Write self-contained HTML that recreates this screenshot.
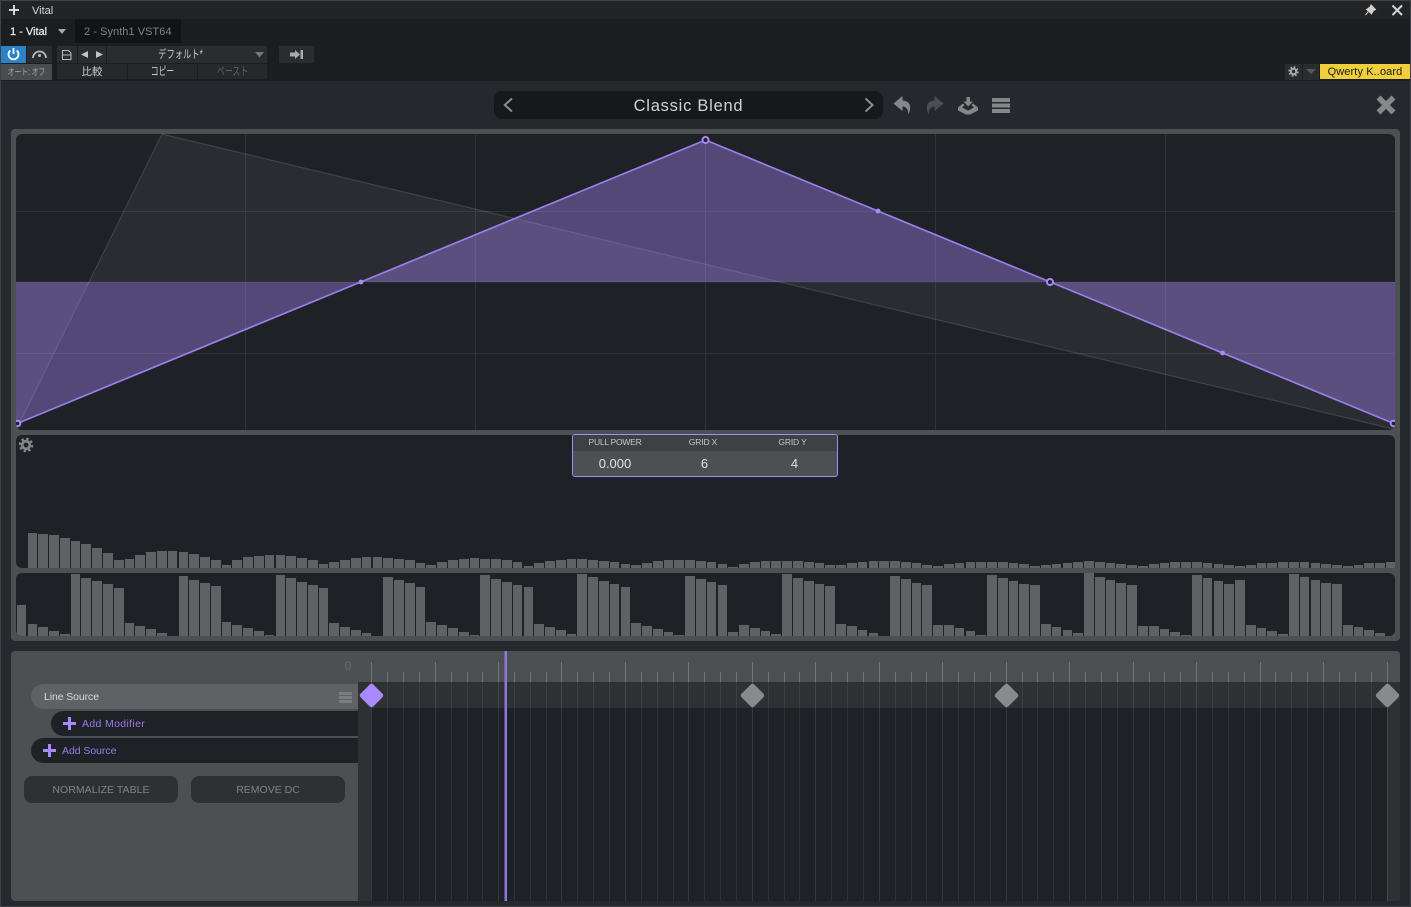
<!DOCTYPE html>
<html><head><meta charset="utf-8"><title>Vital</title>
<style>
html,body{margin:0;padding:0;background:#25282d;}
#r{position:relative;width:1411px;height:907px;overflow:hidden;background:#25282d;font-family:"Liberation Sans","Noto Sans CJK JP",sans-serif;}
#r div{position:absolute;box-sizing:border-box;}
.t{white-space:nowrap;text-align:center;}
.b{background:#2a2d30;}
.c{background:#26292c;}
.p{background:#1e2125;border-radius:6px;overflow:hidden;}
.f{display:flex;align-items:flex-end;gap:1.1px;padding-left:.8px;}
.f i{display:block;flex:1 1 0;background:#5f6164;}
svg{position:absolute;left:0;top:0;}
</style></head><body><div id="r">
<div style="left:0;top:0;width:1411px;height:19px;background:#232426"></div>
<div style="left:0;top:19px;width:1411px;height:62px;background:#1a1e21"></div>
<div style="left:75px;top:19px;width:106px;height:24px;background:#111315"></div>

<div class="t" style="left:32px;top:4px;color:#d8d8d8;font-size:11px;line-height:14px">Vital</div>
<div class="t" style="left:10px;top:25px;color:#f0f0f0;font-size:11px;line-height:14px;-webkit-text-stroke:.2px #f0f0f0">1 - Vital</div>
<div class="t" style="left:84px;top:25px;color:#7f8387;font-size:11px;line-height:14px;letter-spacing:.05px">2 - Synth1 VST64</div>

<div style="left:1px;top:46px;width:25px;height:17px;background:#2a83c8"></div>
<div class="b" style="left:27px;top:46px;width:25px;height:17px"></div>
<div style="left:1px;top:64px;width:51px;height:16px;background:#4a4d50"></div>
<div class="t" style="left:1px;top:64.5px;width:51px;color:#a8aaac;font-size:9px;line-height:15px;transform:scaleX(.75)">オート: オフ</div>
<div class="b" style="left:57px;top:46px;width:20px;height:17px"></div>
<div class="b" style="left:78px;top:46px;width:28px;height:17px"></div>
<div class="b" style="left:107px;top:46px;width:160px;height:17px"></div>
<div class="t" style="left:107px;top:47px;width:147px;color:#c8c8c8;font-size:11.5px;line-height:17px;transform:scaleX(.72)">デフォルト*</div>
<div class="b" style="left:279px;top:46px;width:35px;height:17px"></div>
<div class="c" style="left:57px;top:64px;width:70px;height:15px"></div>
<div class="c" style="left:128px;top:64px;width:69px;height:15px"></div>
<div class="c" style="left:198px;top:64px;width:69px;height:15px"></div>
<div class="t" style="left:57px;top:65px;width:70px;color:#c8c8c8;font-size:10.5px;line-height:15px">比較</div>
<div class="t" style="left:128px;top:65px;width:69px;color:#c8c8c8;font-size:11.5px;line-height:15px;transform:scaleX(.68)">コピー</div>
<div class="t" style="left:198px;top:65px;width:69px;color:#5d6064;font-size:11.5px;line-height:15px;transform:scaleX(.69)">ペースト</div>

<div class="b" style="left:1285px;top:64px;width:17px;height:16px"></div>
<div class="b" style="left:1303px;top:64px;width:16px;height:16px"></div>
<div style="left:1320px;top:64px;width:90px;height:15px;background:#f0cf3c"></div>
<div class="t" style="left:1320px;top:65px;width:90px;color:#1c1c10;font-size:11px;line-height:15px;letter-spacing:.1px">Qwerty K..oard</div>

<div style="left:494px;top:91px;width:389px;height:28px;background:#16191c;border-radius:8px"></div>
<div class="t" style="left:494px;top:92px;width:389px;color:#d2d2d2;font-size:16.5px;line-height:28px;letter-spacing:.75px">Classic Blend</div>

<!-- editor frame -->
<div style="left:11px;top:129px;width:1389px;height:512px;background:#4c5052;border-radius:4px"></div>
<div class="p" style="left:16px;top:134px;width:1379px;height:296px">
<svg width="1379" height="296" viewBox="16 134 1379 296" style="display:block">
<path d="M245.5 134V430M475.5 134V430M705.5 134V430M935.5 134V430M1165.5 134V430M16 211.5H1395M16 282H1395M16 353.5H1395" stroke="#fff" stroke-opacity=".08" fill="none" shape-rendering="crispEdges"/>
<path d="M89 282L162 134L780 282ZM780 282L1395 429.5V282ZM16 282H89L18 426H16Z" fill="#fff" fill-opacity=".05"/>
<path d="M18 426L162 134L1395 429.5" fill="none" stroke="#fff" stroke-opacity=".13" stroke-width="1.2"/>
<path d="M16 282H361L16 424ZM361 282L705.5 140L1050 282ZM1050 282H1395V424Z" fill="#aa88ff" fill-opacity=".38"/>
<path d="M16 424L705.5 140L1395 424" fill="none" stroke="#9a7eea" stroke-width="1.7"/>
<circle cx="361" cy="282" r="2.4" fill="#aa88ff"/><circle cx="878" cy="211" r="2.4" fill="#aa88ff"/><circle cx="1222.5" cy="353" r="2.4" fill="#aa88ff"/>
<g fill="#1e2125" stroke="#aa88ff" stroke-width="2"><circle cx="705.5" cy="140" r="3"/><circle cx="1050" cy="282" r="3"/><circle cx="17.5" cy="423.5" r="2.8"/><circle cx="1393.5" cy="423.5" r="2.8"/></g>
</svg></div>

<div class="p f" style="left:16px;top:435px;width:1379px;height:133px;border-radius:6px 6px 0 6px"><i style="height:0"></i><i style="height:35px"></i><i style="height:34px"></i><i style="height:33px"></i><i style="height:30px"></i><i style="height:27px"></i><i style="height:24px"></i><i style="height:20px"></i><i style="height:15px"></i><i style="height:8px"></i><i style="height:9px"></i><i style="height:13px"></i><i style="height:16px"></i><i style="height:17px"></i><i style="height:17px"></i><i style="height:16px"></i><i style="height:14px"></i><i style="height:11px"></i><i style="height:8px"></i><i style="height:3px"></i><i style="height:8px"></i><i style="height:11px"></i><i style="height:12px"></i><i style="height:13px"></i><i style="height:13px"></i><i style="height:12px"></i><i style="height:10px"></i><i style="height:8px"></i><i style="height:4px"></i><i style="height:6px"></i><i style="height:8px"></i><i style="height:10px"></i><i style="height:11px"></i><i style="height:11px"></i><i style="height:10px"></i><i style="height:9px"></i><i style="height:8px"></i><i style="height:5px"></i><i style="height:3px"></i><i style="height:6px"></i><i style="height:8px"></i><i style="height:9px"></i><i style="height:10px"></i><i style="height:9px"></i><i style="height:9px"></i><i style="height:8px"></i><i style="height:6px"></i><i style="height:2px"></i><i style="height:5px"></i><i style="height:7px"></i><i style="height:8px"></i><i style="height:9px"></i><i style="height:9px"></i><i style="height:8px"></i><i style="height:7px"></i><i style="height:6px"></i><i style="height:4px"></i><i style="height:3px"></i><i style="height:5px"></i><i style="height:7px"></i><i style="height:8px"></i><i style="height:8px"></i><i style="height:8px"></i><i style="height:7px"></i><i style="height:6px"></i><i style="height:4px"></i><i style="height:1px"></i><i style="height:4px"></i><i style="height:6px"></i><i style="height:7px"></i><i style="height:7px"></i><i style="height:7px"></i><i style="height:7px"></i><i style="height:6px"></i><i style="height:5px"></i><i style="height:3px"></i><i style="height:3px"></i><i style="height:5px"></i><i style="height:6px"></i><i style="height:7px"></i><i style="height:7px"></i><i style="height:7px"></i><i style="height:6px"></i><i style="height:5px"></i><i style="height:3px"></i><i style="height:2px"></i><i style="height:4px"></i><i style="height:5px"></i><i style="height:6px"></i><i style="height:6px"></i><i style="height:6px"></i><i style="height:6px"></i><i style="height:5px"></i><i style="height:4px"></i><i style="height:2px"></i><i style="height:3px"></i><i style="height:4px"></i><i style="height:5px"></i><i style="height:6px"></i><i style="height:7px"></i><i style="height:6px"></i><i style="height:5px"></i><i style="height:4px"></i><i style="height:3px"></i><i style="height:2px"></i><i style="height:4px"></i><i style="height:5px"></i><i style="height:6px"></i><i style="height:6px"></i><i style="height:6px"></i><i style="height:5px"></i><i style="height:4px"></i><i style="height:3px"></i><i style="height:2px"></i><i style="height:3px"></i><i style="height:5px"></i><i style="height:5px"></i><i style="height:6px"></i><i style="height:6px"></i><i style="height:6px"></i><i style="height:5px"></i><i style="height:4px"></i><i style="height:3px"></i><i style="height:2px"></i><i style="height:3px"></i><i style="height:5px"></i><i style="height:5px"></i><i style="height:6px"></i></div>

<div class="p f" style="left:16px;top:573px;width:1379px;height:63px"><i style="height:31px"></i><i style="height:12px"></i><i style="height:9px"></i><i style="height:5px"></i><i style="height:2px"></i><i style="height:62px"></i><i style="height:58px"></i><i style="height:55px"></i><i style="height:52px"></i><i style="height:48px"></i><i style="height:13px"></i><i style="height:10px"></i><i style="height:7px"></i><i style="height:3px"></i><i style="height:0"></i><i style="height:60px"></i><i style="height:56px"></i><i style="height:53px"></i><i style="height:50px"></i><i style="height:14px"></i><i style="height:11px"></i><i style="height:8px"></i><i style="height:5px"></i><i style="height:1px"></i><i style="height:61px"></i><i style="height:58px"></i><i style="height:54px"></i><i style="height:51px"></i><i style="height:48px"></i><i style="height:13px"></i><i style="height:9px"></i><i style="height:6px"></i><i style="height:3px"></i><i style="height:0"></i><i style="height:59px"></i><i style="height:56px"></i><i style="height:53px"></i><i style="height:49px"></i><i style="height:14px"></i><i style="height:11px"></i><i style="height:8px"></i><i style="height:4px"></i><i style="height:1px"></i><i style="height:61px"></i><i style="height:57px"></i><i style="height:54px"></i><i style="height:51px"></i><i style="height:49px"></i><i style="height:12px"></i><i style="height:9px"></i><i style="height:6px"></i><i style="height:2px"></i><i style="height:62px"></i><i style="height:59px"></i><i style="height:55px"></i><i style="height:52px"></i><i style="height:49px"></i><i style="height:13px"></i><i style="height:10px"></i><i style="height:7px"></i><i style="height:4px"></i><i style="height:1px"></i><i style="height:60px"></i><i style="height:57px"></i><i style="height:54px"></i><i style="height:51px"></i><i style="height:4px"></i><i style="height:11px"></i><i style="height:8px"></i><i style="height:5px"></i><i style="height:2px"></i><i style="height:62px"></i><i style="height:58px"></i><i style="height:55px"></i><i style="height:52px"></i><i style="height:50px"></i><i style="height:12px"></i><i style="height:10px"></i><i style="height:6px"></i><i style="height:3px"></i><i style="height:0"></i><i style="height:60px"></i><i style="height:57px"></i><i style="height:53px"></i><i style="height:51px"></i><i style="height:11px"></i><i style="height:11px"></i><i style="height:8px"></i><i style="height:5px"></i><i style="height:1px"></i><i style="height:61px"></i><i style="height:58px"></i><i style="height:55px"></i><i style="height:52px"></i><i style="height:51px"></i><i style="height:12px"></i><i style="height:9px"></i><i style="height:6px"></i><i style="height:3px"></i><i style="height:63px"></i><i style="height:59px"></i><i style="height:56px"></i><i style="height:53px"></i><i style="height:51px"></i><i style="height:10px"></i><i style="height:10px"></i><i style="height:7px"></i><i style="height:4px"></i><i style="height:1px"></i><i style="height:61px"></i><i style="height:58px"></i><i style="height:55px"></i><i style="height:52px"></i><i style="height:56px"></i><i style="height:11px"></i><i style="height:8px"></i><i style="height:5px"></i><i style="height:2px"></i><i style="height:62px"></i><i style="height:59px"></i><i style="height:56px"></i><i style="height:53px"></i><i style="height:52px"></i><i style="height:11px"></i><i style="height:9px"></i><i style="height:6px"></i><i style="height:3px"></i><i style="height:0"></i></div>

<!-- overlay -->
<div style="left:572px;top:434px;width:266px;height:43px;background:#4c5053;border:1px solid #aa88ff;border-radius:3px;overflow:hidden"><div style="left:0;top:0;width:264px;height:16px;background:#3e4144"></div></div>
<div class="t" style="left:565px;top:436px;width:100px;color:#c4c6c8;font-size:8.5px;line-height:12px;letter-spacing:-.25px">PULL POWER</div>
<div class="t" style="left:653px;top:436px;width:100px;color:#c4c6c8;font-size:8.5px;line-height:12px;letter-spacing:-.15px">GRID X</div>
<div class="t" style="left:742.5px;top:436px;width:100px;color:#c4c6c8;font-size:8.5px;line-height:12px;letter-spacing:-.15px">GRID Y</div>
<div class="t" style="left:565px;top:456px;width:100px;color:#e2e2e2;font-size:13px;line-height:16px">0.000</div>
<div class="t" style="left:654.5px;top:456px;width:100px;color:#e2e2e2;font-size:13px;line-height:16px">6</div>
<div class="t" style="left:744.5px;top:456px;width:100px;color:#e2e2e2;font-size:13px;line-height:16px">4</div>

<!-- bottom panel -->
<div style="left:11px;top:651px;width:1389px;height:250px;background:#4c5053;border-radius:4px;overflow:hidden">
<div style="left:347px;top:31px;width:1042px;height:219px;background:#2e3134"></div>
<div style="left:360px;top:57px;width:1016px;height:193px;background:#1e2125"></div>
</div>
<div class="t" style="left:338px;top:659px;width:20px;color:#686b6e;font-size:12px;line-height:14px">0</div>
<div style="left:31px;top:684px;width:327px;height:25px;background:#5f6164;border-radius:12.5px 0 0 12.5px"></div>
<div style="left:51px;top:711px;width:307px;height:25px;background:#1e2125;border-radius:12.5px 0 0 12.5px"></div>
<div style="left:31px;top:738px;width:327px;height:25px;background:#1e2125;border-radius:12.5px 0 0 12.5px"></div>
<div class="t" style="left:44px;top:690px;color:#d8d8d8;font-size:10.5px;line-height:14px;letter-spacing:-.1px">Line Source</div>
<div class="t" style="left:82px;top:717px;color:#9c7ce8;font-size:10.5px;line-height:14px;letter-spacing:.35px">Add Modifier</div>
<div class="t" style="left:62px;top:744px;color:#9c7ce8;font-size:10.5px;line-height:14px;letter-spacing:-.05px">Add Source</div>
<div style="left:24px;top:776px;width:154px;height:27px;background:#2e3134;border-radius:8px"></div>
<div style="left:191px;top:776px;width:154px;height:27px;background:#2e3134;border-radius:8px"></div>
<div class="t" style="left:24px;top:777px;width:154px;color:#808386;font-size:10.5px;line-height:27px;letter-spacing:.05px">NORMALIZE TABLE</div>
<div class="t" style="left:191px;top:777px;width:154px;color:#808386;font-size:10.5px;line-height:27px">REMOVE DC</div>

<!-- graphic overlay -->
<svg width="1411" height="907" viewBox="0 0 1411 907">
<defs>
<linearGradient id="tg" gradientUnits="userSpaceOnUse" x1="0" y1="651" x2="0" y2="901"><stop offset="0" stop-color="#fff" stop-opacity=".2"/><stop offset=".124" stop-color="#fff" stop-opacity=".2"/><stop offset=".124" stop-color="#fff" stop-opacity=".07"/><stop offset="1" stop-color="#fff" stop-opacity=".07"/></linearGradient>
<linearGradient id="tm" gradientUnits="userSpaceOnUse" x1="0" y1="651" x2="0" y2="901"><stop offset="0" stop-color="#fff" stop-opacity=".22"/><stop offset=".124" stop-color="#fff" stop-opacity=".22"/><stop offset=".124" stop-color="#fff" stop-opacity=".11"/><stop offset="1" stop-color="#fff" stop-opacity=".11"/></linearGradient>
</defs>
<rect x="0" y="0" width="1411" height="1" fill="#3f4247"/><rect x="0" y="0" width="1" height="907" fill="#3f4247"/><rect x="1410" y="0" width="1" height="907" fill="#3f4247"/><rect x="0" y="906" width="1411" height="1" fill="#3f4247"/>
<rect x="358" y="682" width="1042" height="26" fill="#2e3134"/>
<path fill="none" stroke="url(#tg)" shape-rendering="crispEdges" d="M387.5 672V901M403.5 672V901M419.5 672V901M451.5 672V901M467.5 672V901M482.5 672V901M514.5 672V901M530.5 672V901M546.5 672V901M577.5 672V901M593.5 672V901M609.5 672V901M641.5 672V901M657.5 672V901M673.5 672V901M704.5 672V901M720.5 672V901M736.5 672V901M768.5 672V901M784.5 672V901M799.5 672V901M831.5 672V901M847.5 672V901M863.5 672V901M895.5 672V901M911.5 672V901M926.5 672V901M958.5 672V901M974.5 672V901M990.5 672V901M1022.5 672V901M1037.5 672V901M1053.5 672V901M1085.5 672V901M1101.5 672V901M1117.5 672V901M1149.5 672V901M1164.5 672V901M1180.5 672V901M1212.5 672V901M1228.5 672V901M1244.5 672V901M1275.5 672V901M1291.5 672V901M1307.5 672V901M1339.5 672V901M1355.5 672V901M1371.5 672V901"/>
<path fill="none" stroke="url(#tm)" shape-rendering="crispEdges" d="M371.5 662V901M435.5 662V901M498.5 662V901M561.5 662V901M625.5 662V901M688.5 662V901M752.5 662V901M815.5 662V901M879.5 662V901M942.5 662V901M1006.5 662V901M1069.5 662V901M1133.5 662V901M1196.5 662V901M1260.5 662V901M1323.5 662V901M1387.5 662V901"/>
<rect x="504.5" y="651" width="2.5" height="250" fill="#8f75dc"/>
<g fill="#888b8e"><rect x="743.5" y="686.5" width="18" height="18" rx="2.5" transform="rotate(45 752.5 695.5)"/><rect x="997.5" y="686.5" width="18" height="18" rx="2.5" transform="rotate(45 1006.5 695.5)"/><rect x="1378.5" y="686.5" width="18" height="18" rx="2.5" transform="rotate(45 1387.5 695.5)"/></g>
<rect x="362.5" y="686.5" width="18" height="18" rx="2.5" transform="rotate(45 371.5 695.5)" fill="#aa88ff"/>
<g fill="#7b7d80"><rect x="339" y="692" width="13" height="3"/><rect x="339" y="696" width="13" height="3"/><rect x="339" y="700" width="13" height="3"/></g>
<g fill="#aa88ff"><rect x="63" y="722" width="13" height="3"/><rect x="68" y="717" width="3" height="13"/><rect x="43" y="749" width="13" height="3"/><rect x="48" y="744" width="3" height="13"/></g>
<!-- title bar -->
<path d="M9 10H19M14 5V15" stroke="#d8d8d8" stroke-width="2" fill="none"/>
<path d="M1392.5 5.5L1402 15M1402 5.5L1392.5 15" stroke="#d8d8d8" stroke-width="2" fill="none"/>
<path d="M1371 5L1375.5 9.5L1373.5 10.5L1371.5 14L1366.5 9.5L1370 7ZM1368 12L1365.5 15" fill="#cfcfcf" stroke="#cfcfcf" stroke-width="1"/>
<path d="M58 29L66 29L62 34Z" fill="#a8aaac"/>
<!-- toolbar icons -->
<path d="M10.3 50.5A5 5 0 1 0 16.7 50.5M13.5 48V54" fill="none" stroke="#fff" stroke-width="1.8"/>
<path d="M33 58A6.5 6.5 0 0 1 46 58" fill="none" stroke="#b8babc" stroke-width="1.8"/><circle cx="39.5" cy="55.5" r="1.5" fill="#b8babc"/>
<path d="M62.5 50.5H68.5L71 53V59.5H62.5ZM62.5 55H71" fill="none" stroke="#b8babc" stroke-width="1"/>
<path d="M88 51V58L81 54.5Z" fill="#c0c2c4"/><path d="M96 51V58L103 54.5Z" fill="#c0c2c4"/>
<path d="M255 52H264L259.5 57.5Z" fill="#75787b"/>
<path d="M290 52.5H295V50L300 54.5L295 59V56.5H290Z" fill="#a8aaac"/><rect x="300.5" y="50" width="2.5" height="9" fill="#a8aaac"/>
<path d="M1306 69H1316L1311 74Z" fill="#55585b"/>
<!-- gears -->
<g fill="none" stroke="#a8aaac"><circle cx="1293.5" cy="71.5" r="2.7" stroke-width="2"/><circle cx="1293.5" cy="71.5" r="4.3" stroke-width="1.8" stroke-dasharray="1.7 1.68"/></g>
<g fill="none" stroke="#838588"><circle cx="26" cy="445" r="3.8" stroke-width="2.8"/><circle cx="26" cy="445" r="6" stroke-width="2.6" stroke-dasharray="2.36 2.352"/></g>
<!-- preset bar -->
<path d="M512 98.5L504.8 105L512 111.5" fill="none" stroke="#8a8d90" stroke-width="2"/>
<path d="M865.5 98.5L872.5 105L865.5 111.5" fill="none" stroke="#8a8d90" stroke-width="2"/>
<path d="M902.5 96L893.5 103.5L902.5 111V106.5C906.5 106.5 908 109.5 908.5 114.5C911.5 108 911 101 902.5 100.5Z" fill="#85888b"/>
<path d="M934.5 96L943.5 103.5L934.5 111V106.5C930.5 106.5 929 109.5 928.5 114.5C925.5 108 926 101 934.5 100.5Z" fill="#4a4d51"/>
<path d="M966.5 97H970V101.5H973L968.2 106.5L963.5 101.5H966.5Z" fill="#85888b"/>
<path d="M963 103.5L958 107.5V110.5L966 114.5H970L978 110.5V107.5L973 103.5L971.5 105L974 107.5L968 110.5L962 107.5L964.5 105Z" fill="#85888b"/>
<g fill="#85888b"><rect x="992" y="98" width="18" height="4"/><rect x="992" y="103.5" width="18" height="4"/><rect x="992" y="109" width="18" height="4"/></g>
<path d="M1378.5 97.5L1393.5 112.5M1393.5 97.5L1378.5 112.5" stroke="#85888b" stroke-width="5.5" fill="none"/>
</svg>
</div></body></html>
